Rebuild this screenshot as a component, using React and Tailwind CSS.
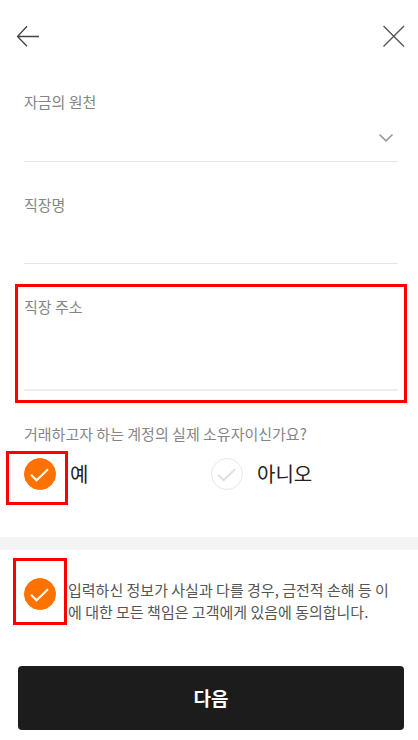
import React, { useState } from 'react';

const CheckMark = () => (
  <svg
    viewBox="0 0 32 32"
    fill="none"
    stroke="currentColor"
    strokeWidth="2"
    className="size-8"
    aria-hidden="true"
  >
    <path d="M7 16.8 L12.6 22.3 L24 11.3" />
  </svg>
);

const RoundCheck = ({ type, ...props }) => (
  <span className="grid shrink-0">
    <input
      type={type}
      className="peer col-start-1 row-start-1 size-8 appearance-none rounded-full border-[1.5px] border-[#e8e8e8] bg-white checked:border-[#ff7200] checked:bg-[#ff7200]"
      {...props}
    />
    <span className="pointer-events-none col-start-1 row-start-1 text-[#e0e0e0] peer-checked:text-white">
      <CheckMark />
    </span>
  </span>
);

const Field = ({ id, label, children }) => (
  <div className="flex flex-col">
    <label htmlFor={id} className="text-[15px] leading-[22px] text-[#858585]">
      {label}
    </label>
    {children}
  </div>
);

const App = () => {
  const [source, setSource] = useState('');
  const [company, setCompany] = useState('');
  const [address, setAddress] = useState('');
  const [owner, setOwner] = useState('yes');
  const [agreed, setAgreed] = useState(true);

  return (
    <div className="min-h-screen bg-white font-['Noto_Sans_CJK_KR',sans-serif] text-[#222222]">
      <header className="flex items-center justify-between px-3 pt-6 pb-[43px]">
        <button type="button" aria-label="뒤로" className="pl-1">
          <svg viewBox="0 0 24 24" fill="none" stroke="#444444" strokeWidth="1.3" className="size-6">
            <path d="M23 12.5 H1.5 M11 2.3 L1.5 12.5 L11 22.3" />
          </svg>
        </button>
        <button type="button" aria-label="닫기">
          <svg viewBox="0 0 24 24" fill="none" stroke="#555555" strokeWidth="1.4" className="size-6">
            <path d="M1.5 2 L22 22.5 M22 2 L1.5 22.5" />
          </svg>
        </button>
      </header>

      <form onSubmit={(e) => e.preventDefault()}>
        <div className="flex flex-col gap-8 pr-5 pl-6">
          <Field id="source" label="자금의 원천">
            <div className="grid border-b border-[#e6e6e6]">
              <select
                id="source"
                value={source}
                onChange={(e) => setSource(e.target.value)}
                className="col-start-1 row-start-1 h-12 w-full appearance-none bg-transparent pr-8 text-[15px] outline-none"
              >
                <option value=""></option>
              </select>
              <svg
                viewBox="0 0 16 16"
                fill="none"
                stroke="#999999"
                strokeWidth="1.6"
                className="pointer-events-none col-start-1 row-start-1 mr-1 size-4 self-center justify-self-end"
              >
                <path d="M1.5 5.5 L8 11.8 L14.5 5.5" />
              </svg>
            </div>
          </Field>

          <Field id="company" label="직장명">
            <input
              id="company"
              type="text"
              value={company}
              onChange={(e) => setCompany(e.target.value)}
              className="h-12 w-full border-b border-[#e6e6e6] text-[15px] outline-none"
            />
          </Field>

          <div className="relative">
            <Field id="address" label="직장 주소">
              <textarea
                id="address"
                value={address}
                onChange={(e) => setAddress(e.target.value)}
                className="h-[73px] w-full resize-none border-b-2 border-[#eeeeee] text-[15px] outline-none"
              />
            </Field>
            <div className="pointer-events-none absolute -inset-x-[9px] -inset-y-3 border-3 border-[#ff0000]" />
          </div>

          <fieldset>
            <legend className="text-[15px] leading-[22px] text-[#858585]">
              거래하고자 하는 계정의 실제 소유자이신가요?
            </legend>
            <div className="grid grid-cols-2 pt-[13px]">
              <label className="relative flex items-center gap-3.5 text-xl leading-8">
                <RoundCheck
                  type="radio"
                  name="owner"
                  checked={owner === 'yes'}
                  onChange={() => setOwner('yes')}
                />
                예
                <span className="pointer-events-none absolute -top-[7px] -left-[18px] h-[54px] w-[62px] border-3 border-[#ff0000]" />
              </label>
              <label className="flex items-center gap-3.5 text-xl leading-8">
                <RoundCheck
                  type="radio"
                  name="owner"
                  checked={owner === 'no'}
                  onChange={() => setOwner('no')}
                />
                아니오
              </label>
            </div>
          </fieldset>
        </div>

        <div className="mt-[47px] h-[13px] bg-[#f4f4f4]" />

        <label className="relative flex items-start gap-3 px-6 pt-7">
          <RoundCheck
            type="checkbox"
            checked={agreed}
            onChange={(e) => setAgreed(e.target.checked)}
          />
          <span className="pt-px text-[15px] leading-[22px] text-[#555555]">
            입력하신 정보가 사실과 다를 경우, 금전적 손해 등 이에 대한 모든 책임은 고객에게 있음에 동의합니다.
          </span>
          <span className="pointer-events-none absolute top-2 left-[13px] h-[67px] w-[54px] border-3 border-[#ff0000]" />
        </label>

        <div className="pt-[43px] pr-3.5 pb-2 pl-[18px]">
          <button
            type="submit"
            className="h-16 w-full rounded-[4px] bg-[#1c1c1c] text-[19px] font-bold text-white"
          >
            다음
          </button>
        </div>
      </form>
    </div>
  );
};

export default App;
